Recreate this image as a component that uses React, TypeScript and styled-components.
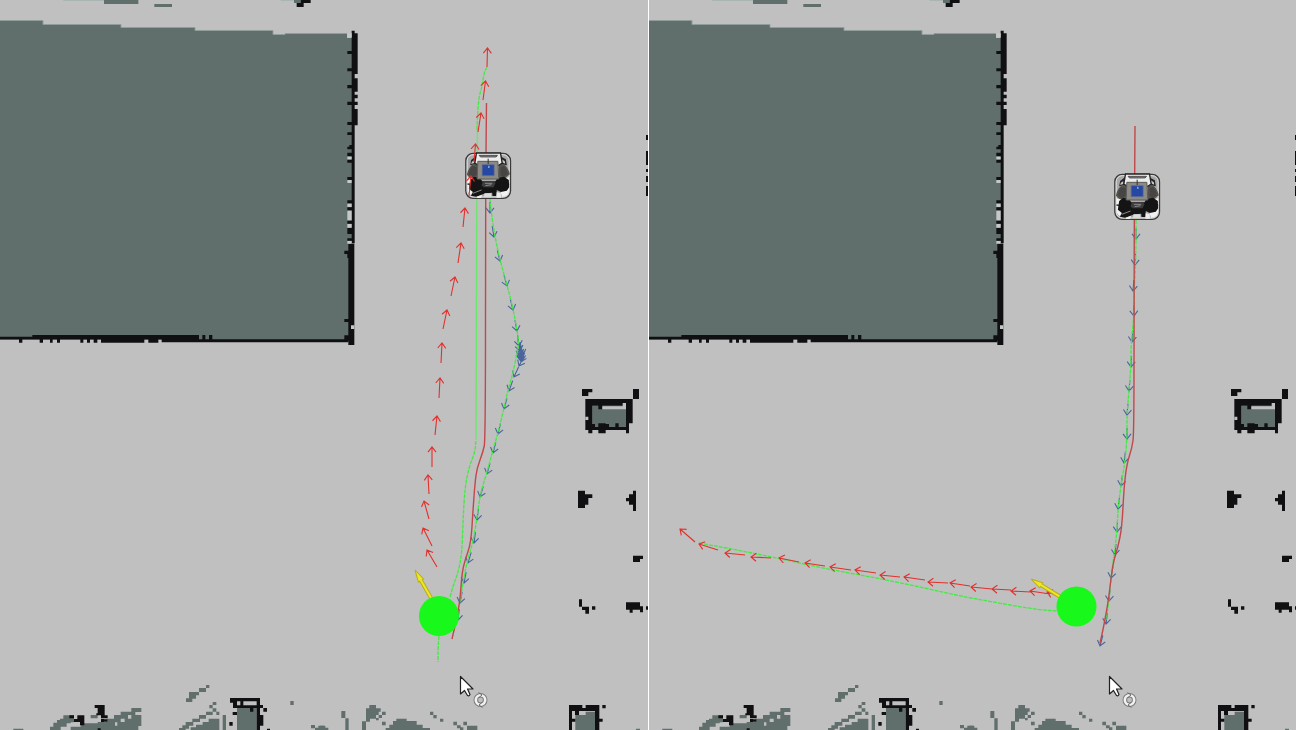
import React from "react";
import styled, { createGlobalStyle } from "styled-components";

const GlobalStyle = createGlobalStyle`
  body {
    margin: 0;
    background: #c0c0c0;
    font-family: "Liberation Sans", Arial, sans-serif;
  }
`;

const Comparison = styled.main`
  display: grid;
  grid-template-columns: 1fr 1fr;
  min-height: 100vh;
`;

const Pane = styled.section<{ $divided?: boolean }>`
  min-width: 0;
  background: #c0c0c0;
  border-left: ${(p) => (p.$divided ? "1px solid #ffffff" : "0")};
`;

const MapCanvas = styled.svg`
  display: block;
  width: 100%;
  height: 100vh;
`;

type Point = [number, number];
type Block = [number, number, number, number];
type Segment = [number, number, number, number];

const FLOOR = "#c0c0c0";
const UNKNOWN = "#606e6c";
const WALL = "#101012";
const THIRD = 1 / 3;

/* Occupancy blocks are [left, top, right, bottom], in thirds of a map pixel. */
function Blocks({ x = 0, y = 0, fill, cells }: { x?: number; y?: number; fill: string; cells: Block[] }) {
  const d = cells.map(([l, t, r, b]) => `M${l} ${t}H${r}V${b}H${l}Z`).join("");
  return <path transform={`translate(${x} ${y}) scale(${THIRD})`} fill={fill} d={d} />;
}

const roomEdge: Block[] = [
  [95, 32, 104, 670], [95, 40, 113, 162], [95, 175, 113, 215], [95, 224, 113, 235], [95, 245, 113, 255],
  [95, 267, 113, 316], [85, 671, 103, 975], [82, 93, 95, 102], [82, 145, 95, 154], [82, 195, 95, 205],
  [82, 245, 95, 255], [82, 306, 95, 315], [82, 337, 95, 345], [82, 380, 95, 388], [88, 375, 95, 380],
  [82, 398, 95, 408], [82, 420, 95, 428], [82, 471, 95, 480], [82, 541, 95, 550], [82, 562, 95, 571],
  [82, 602, 95, 611], [82, 624, 95, 642], [82, 655, 95, 662], [73, 692, 85, 702], [82, 702, 86, 714],
  [73, 897, 85, 906], [73, 946, 85, 962],
];
const roomGaps: Block[] = [
  [82, 40, 95, 52], [82, 410, 95, 418], [82, 480, 95, 489], [82, 551, 95, 561], [82, 572, 95, 601],
  [82, 612, 95, 623], [82, 663, 95, 671], [93, 916, 103, 927],
];
const roomBase: Block[] = [
  [0, 80, 97, 88], [97, 75, 597, 88], [303, 88, 433, 98], [445, 88, 475, 98], [485, 88, 1045, 97],
  [607, 75, 616, 88], [627, 75, 637, 88], [57, 88, 67, 98], [119, 88, 129, 98], [150, 88, 158, 98],
  [171, 88, 180, 98], [241, 88, 250, 98], [261, 88, 270, 98], [281, 88, 292, 98],
];
const clutter: Block[] = [
  [66, 57, 97, 67], [66, 67, 85, 78], [219, 57, 237, 87], [76, 87, 218, 107], [76, 87, 97, 180],
  [198, 87, 218, 160], [198, 160, 207, 190], [85, 171, 207, 180], [85, 180, 97, 190], [115, 160, 137, 190],
  [97, 162, 105, 180], [137, 162, 147, 172], [166, 160, 176, 171], [115, 107, 127, 118],
  [54, 362, 75, 414], [75, 373, 85, 404], [85, 373, 97, 384], [219, 362, 228, 423], [207, 373, 219, 404],
  [198, 384, 207, 394], [219, 557, 249, 567], [219, 567, 240, 576], [57, 688, 66, 710], [66, 710, 87, 720],
  [76, 720, 87, 731], [96, 709, 106, 719], [198, 697, 240, 719], [240, 709, 249, 727], [209, 719, 218, 728],
  [258, 709, 264, 719],
];
const lowerLeftGrey: Block[] = [
  [394, 114, 424, 126], [362, 125, 406, 135], [342, 135, 384, 146], [320, 146, 362, 157], [293, 156, 345, 167],
  [394, 135, 424, 146], [374, 146, 424, 157], [352, 156, 424, 168], [322, 167, 415, 180], [180, 146, 222, 157],
  [190, 136, 222, 147], [171, 150, 212, 160], [160, 158, 200, 170], [150, 170, 182, 180], [242, 160, 322, 172],
  [212, 170, 330, 180], [272, 135, 293, 145], [40, 176, 70, 180],
  [618, 45, 628, 54], [597, 54, 618, 66], [567, 66, 597, 76], [567, 76, 588, 86], [558, 85, 577, 96],
  [638, 96, 649, 105], [628, 105, 638, 115], [638, 115, 649, 125], [649, 125, 658, 135], [618, 125, 638, 135],
  [597, 135, 618, 146], [577, 146, 600, 156], [557, 156, 580, 167], [537, 174, 557, 180], [547, 166, 567, 176],
  [626, 146, 658, 180], [608, 156, 658, 180], [588, 164, 658, 180], [572, 172, 658, 180], [668, 135, 678, 180],
  [711, 114, 770, 180], [871, 93, 881, 105], [933, 165, 945, 175], [955, 167, 976, 180], [945, 173, 985, 180],
];
const lowerLeftWall: Block[] = [
  [284, 105, 314, 114], [293, 114, 314, 136], [303, 135, 314, 145], [289, 130, 314, 136], [314, 136, 323, 145],
  [303, 147, 312, 156], [208, 136, 222, 145], [232, 136, 253, 147], [222, 147, 253, 156], [240, 156, 253, 166],
  [293, 175, 302, 180], [312, 148, 322, 155],
  [690, 84, 780, 94], [690, 94, 711, 98], [699, 98, 711, 114], [699, 106, 780, 114], [721, 94, 730, 108],
  [770, 84, 780, 180], [780, 135, 790, 167], [790, 114, 801, 125], [780, 105, 789, 114], [750, 114, 760, 125],
  [698, 126, 711, 135], [688, 156, 698, 167], [801, 176, 810, 180],
];
const lowerRightGrey: Block[] = [
  [64, 123, 76, 144], [76, 145, 86, 180], [0, 167, 12, 180], [12, 174, 22, 180], [148, 105, 168, 115],
  [138, 115, 182, 125], [138, 125, 176, 135], [186, 125, 197, 135], [138, 135, 168, 146], [176, 135, 186, 144],
  [168, 144, 176, 151], [138, 146, 150, 155], [126, 154, 138, 180], [186, 155, 197, 166], [229, 146, 260, 156],
  [219, 153, 290, 166], [208, 164, 308, 180], [197, 174, 330, 180], [330, 125, 340, 135], [340, 135, 350, 145],
  [360, 146, 370, 155], [400, 155, 411, 166], [411, 166, 422, 175], [430, 155, 441, 166], [420, 172, 430, 180],
  [441, 167, 472, 180], [766, 135, 825, 180], [797, 125, 825, 136], [948, 176, 960, 180],
];
const lowerRightWall: Block[] = [
  [747, 105, 787, 123], [797, 105, 838, 123], [787, 114, 797, 123], [747, 105, 756, 180], [756, 146, 766, 155],
  [765, 123, 777, 135], [825, 105, 838, 180], [838, 146, 848, 155], [847, 105, 857, 115],
];

function OccupancyGrid() {
  return (
    <g>
      <path
        fill={UNKNOWN}
        d="M0 21H43V24H121V28H195V31H273V35H285V34H347V38H352V340H0Z"
      />
      <path
        fill="none"
        stroke="#8f9d9b"
        d="M0 20.5H43V24.5H121V27.5H195V30.5H273V34.5H285V33.5H347"
      />
      <Blocks fill={UNKNOWN} cells={[[312, 0, 415, 12], [463, 12, 516, 21], [882, 0, 902, 9]]} />
      <Blocks fill="#a9b5b2" cells={[[190, 0, 312, 3], [842, 0, 882, 3]]} />
      <Blocks fill={WALL} cells={[[902, 0, 932, 9], [890, 9, 911, 21]]} />
      <Blocks x={320} y={20} fill={WALL} cells={roomEdge} />
      <Blocks x={320} y={20} fill="#c4c8c7" cells={roomGaps} />
      <Blocks y={310} fill={WALL} cells={roomBase} />
      <Blocks x={560} y={370} fill={UNKNOWN} cells={[[97, 107, 198, 171]]} />
      <Blocks x={560} y={370} fill={WALL} cells={clutter} />
      <Blocks x={560} y={370} fill={FLOOR} cells={[[76, 140, 85, 150], [127, 109, 198, 118], [188, 99, 198, 109]]} />
      <Blocks y={670} fill={UNKNOWN} cells={lowerLeftGrey} />
      <Blocks y={670} fill={WALL} cells={lowerLeftWall} />
      <Blocks x={320} y={670} fill={UNKNOWN} cells={lowerRightGrey} />
      <Blocks x={320} y={670} fill={WALL} cells={lowerRightWall} />
      <path fill={WALL} d="M646 135h2v5h-2zM646 151h2v14h-2zM646 169h2v3h-2zM646 176h2v6h-2zM646 186h2v10h-2z" />
    </g>
  );
}

function arrowPath([tx, ty, bx, by]: Segment, wing: number) {
  const length = Math.hypot(bx - tx, by - ty) || 1;
  const ux = (bx - tx) / length;
  const uy = (by - ty) / length;
  const back = wing * 1.3;
  return (
    `M${bx} ${by}L${tx} ${ty}` +
    `M${tx + ux * back - uy * wing} ${ty + uy * back + ux * wing}L${tx} ${ty}` +
    `L${tx + ux * back + uy * wing} ${ty + uy * back - ux * wing}`
  );
}

function PoseArrows({ poses, color, wing }: { poses: Segment[]; color: string; wing: number }) {
  return <path d={poses.map((p) => arrowPath(p, wing)).join("")} fill="none" stroke={color} strokeWidth={1.1} />;
}

/* Rounds each corner of a track by curving from midpoint to midpoint. */
function trackPath(points: Point[]) {
  const [first] = points;
  const last = points[points.length - 1];
  const curves = points.slice(1, -1).map(([x, y], i) => {
    const [nx, ny] = points[i + 2];
    return `Q${x} ${y} ${(x + nx) / 2} ${(y + ny) / 2}`;
  });
  return `M${first[0]} ${first[1]}${curves.join("")}L${last[0]} ${last[1]}`;
}

function Track({ points, color, dashed }: { points: Point[]; color: string; dashed?: boolean }) {
  return (
    <path
      d={trackPath(points)}
      fill="none"
      stroke={color}
      strokeWidth={dashed ? 1.3 : 1.4}
      strokeDasharray={dashed ? "4 1" : undefined}
    />
  );
}

/* Short arrows that point along a descending path, one for each tip. */
const descending = (tips: Point[]): Segment[] =>
  tips.map(([x, y], i) => {
    const [px, py] = i ? tips[i - 1] : ([x, y - 14] as Point);
    const length = Math.hypot(px - x, py - y) || 1;
    return [x, y, x + ((px - x) / length) * 11, y + ((py - y) / length) * 11];
  });

function Robot({ x, y }: { x: number; y: number }) {
  return (
    <g transform={`translate(${x} ${y}) scale(${THIRD})`}>
      <rect x="1" y="4" width="134" height="135" rx="22" fill="#a9a9a9" stroke="#3a3a3a" strokeWidth="4" />
      <rect x="5" y="8" width="126" height="127" rx="18" fill="none" stroke="#e4e4e4" strokeWidth="3" />
      <path d="M17 24L32 12L30 36L14 40ZM103 12L121 22L124 40L106 36Z" fill="#262626" />
      <path d="M19 29L27 24L26 33L17 36ZM109 22L118 28L119 35L110 31Z" fill="#c9c9c9" />
      <path d="M24 35L40 38V74L21 84L4 68Q8 46 24 35ZM101 36L113 35Q129 46 133 67L112 84L98 74Z" fill="#56524d" />
      <path d="M20 42L34 46V68L20 76L10 66Q12 50 20 42ZM106 46L116 42Q125 52 127 66L113 76L105 68Z" fill="#474543" />
      <path d="M33 3H105L110 33L100 40H38L28 33Z" fill="#ececec" stroke="#242424" strokeWidth="4" />
      <path d="M41 10H96L92 15H45Z" fill="#8a8a8a" stroke="#222222" strokeWidth="2" />
      <path d="M5 76L24 80L38 120L32 132Q7 134 6 112ZM131 76L112 80L104 118L110 134Q131 134 131 112Z" fill="#f2f2f2" />
      <path d="M6 96L20 98M116 98L131 96" stroke="#2b2b2b" strokeWidth="4" />
      <path
        d="M14 84L26 74L44 78L50 88L90 88L96 78L116 74L130 84L131 106L124 116L106 120L94 114L92 132H81L80 122L60 124L32 134L16 131L22 120L10 110Z"
        fill="#141414"
      />
      <path d="M52 88H86L90 94L84 106H54L48 100Z" fill="#3c3c3c" />
      <path d="M58 94H80M60 101L78 98M22 124L48 114" fill="none" stroke="#8a8a8a" strokeWidth="3" />
      <path d="M57 124H77V136H55Z" fill="#dcdcdc" />
      <path d="M94 120L106 124V137H93Z" fill="#eeeeee" />
      <path d="M34 134L50 128L47 138H34Z" fill="#eeeeee" />
      <path d="M37 28H97L100 81H35Z" fill="#8b8a86" stroke="#5d5c5a" strokeWidth="3" />
      <path d="M50 38H86V71H50Z" fill="#2548a4" stroke="#66708c" strokeWidth="2" />
      <path d="M68 20V36" fill="none" stroke="#333333" strokeWidth="3" />
      <path d="M70 41V48" stroke="#92b1df" strokeWidth="4" />
    </g>
  );
}

function Goal({ x, y, tip, tail }: { x: number; y: number; tip: Point; tail: Point }) {
  const angle = (Math.atan2(tip[1] - tail[1], tip[0] - tail[0]) * 180) / Math.PI;
  const reach = Math.hypot(tip[0] - tail[0], tip[1] - tail[1]);
  return (
    <g>
      <g transform={`translate(${tail[0]} ${tail[1]}) rotate(${angle})`}>
        <path
          d={`M-3 -1.5H${reach - 12}V-3L${reach} 0L${reach - 12} 3V1.5H-3Z`}
          fill="#eee820"
          stroke="#b8ac1c"
          strokeWidth="1"
        />
      </g>
      <circle cx={x} cy={y} r="20" fill="#18f81a" />
    </g>
  );
}

function RotateCursor() {
  return (
    <g>
      <path
        d="M460.500 676.500V694L464.500 690.500L467.500 695.500Q469 696.500 470 694.500L467.500 689H473Z"
        fill="#ffffff"
        stroke="#202020"
        strokeWidth="1.200"
        strokeLinejoin="round"
      />
      <g transform="translate(480.5 700)" fill="none">
        <circle r="4.7" stroke="#7c7c7c" strokeWidth="4.600" />
        <circle r="4.7" stroke="#f2f2f2" strokeWidth="2.600" />
        <path d="M-2 -7.500L1.500 -5L-1.500 -2.500M2 7.500L-1.500 5L1.500 2.500" stroke="#6c6c6c" strokeWidth="1" />
      </g>
    </g>
  );
}

const RED = "#e2302c";
const PATH_RED = "#c0484a";
const GREEN = "#43ea43";
const BLUE = "#4a659c";

interface Scene {
  name: string;
  robot: Point;
  goal: { x: number; y: number; tip: Point; tail: Point };
  green: Point[][];
  solidGreen: Point[][];
  red: Point[];
  forward: Segment[];
  back: Segment[];
}

const detour: Scene = {
  name: "Planned route with a detour",
  robot: [465.5, 152],
  goal: { x: 439, y: 616, tip: [415, 570], tail: [431, 598] },
  green: [
    [[450, 597], [454, 583], [458, 573], [462, 553], [463, 520], [465, 487], [469, 467], [475, 452], [476, 440]],
    [[477, 130], [478, 100], [482, 87], [484, 73], [487, 67]],
    [[439, 636], [438, 647], [438, 662]],
    [
      [490, 198], [491, 211], [495, 237], [500, 260], [507, 285], [513, 308], [517, 330], [519, 343], [517, 353],
      [513, 373], [508, 390], [504, 408], [498, 433], [493, 450], [487, 472], [480, 495], [477, 518], [473, 542],
      [467, 562], [463, 582], [460, 603],
    ],
  ],
  solidGreen: [[[476, 440], [476, 300], [477.5, 130]]],
  red: [
    [486.5, 103], [486, 155], [485.5, 198], [485.5, 440], [483, 452], [477, 468], [475, 483], [473, 510], [471, 543],
    [465, 560], [462, 573], [460, 600], [457, 617], [452, 639],
  ],
  forward: [
    [487.5, 48, 487, 67], [485.5, 81, 483, 100], [481, 113, 478, 132], [475.5, 144, 474, 162], [471, 176, 469, 196],
    [465, 208, 463, 227], [461, 243, 458, 263], [455, 277, 451, 296], [447, 310, 443, 329], [442, 343, 441, 363],
    [440, 378, 439, 398], [437, 416, 435, 435], [432, 447, 432, 467], [428, 475, 429, 494], [424, 501, 429, 519],
    [423, 528, 432, 546], [427, 550, 437, 567],
  ],
  back: [
    ...descending([
      [490, 213], [494, 237], [500, 261], [507, 286], [513, 310], [517, 331], [519, 346], [520, 351], [521, 355],
      [522, 359], [521, 362], [519, 366], [514, 377], [509, 391], [504, 409], [498, 434], [493, 453], [487, 474],
      [480, 497], [477, 520], [474, 543], [468, 563], [464, 583], [460, 603], [458, 620],
    ]),
    [521, 357, 519, 343], [523, 355, 520, 342], [520, 360, 520, 345], [522, 361, 521, 346],
  ],
};

const direct: Scene = {
  name: "Planned route straight to the goal",
  robot: [465.5, 173],
  goal: { x: 427.5, y: 606.5, tip: [382, 579], tail: [410, 596] },
  green: [
    [
      [50, 543], [78, 548], [128, 558], [178, 569], [244, 581], [311, 596], [344, 602], [378, 608], [394, 610],
      [408, 611],
    ],
    [
      [487, 220], [487, 262], [485, 291], [485, 316], [482, 345], [482, 366], [480, 390], [478, 415], [478, 438],
      [476, 462], [472, 485], [469, 508], [468, 532], [465, 555], [462, 578], [460, 600], [457, 620],
    ],
  ],
  solidGreen: [],
  red: [
    [486, 126], [485.5, 173], [485, 300], [485, 433], [483, 448], [478, 463], [475, 487], [473, 527], [469, 547],
    [464, 563], [461, 587], [459, 603], [454, 630], [451, 643],
  ],
  forward: [
    [31, 529, 46, 542], [50, 544, 69, 550], [76, 553, 96, 555], [102, 557, 122, 558], [130, 558, 150, 562],
    [156, 563, 176, 566], [181, 567, 202, 570], [206, 570, 227, 573], [231, 575, 251, 577], [255, 577, 276, 580],
    [279, 582, 299, 583], [301, 583, 321, 586], [322, 587, 343, 589], [343, 589, 362, 590], [362, 591, 382, 592],
    [381, 591, 401, 594], [398, 592, 414, 597],
  ],
  back: descending([
    [487, 239], [486, 265], [484, 291], [485, 316], [483, 342], [482, 367], [480, 391], [478, 415], [478, 439],
    [475, 463], [472, 486], [469, 509], [468, 532], [466, 555], [462, 578], [460, 601], [457, 624], [451, 646],
  ]),
};

function SceneMap({ scene }: { scene: Scene }) {
  return (
    <MapCanvas viewBox="0 0 648 730" preserveAspectRatio="xMinYMin slice" role="img" aria-label={scene.name}>
      <OccupancyGrid />
      {scene.solidGreen.map((points, i) => (
        <Track key={i} points={points} color="#6be86a" />
      ))}
      <PoseArrows poses={scene.back} color={BLUE} wing={4} />
      {scene.green.map((points, i) => (
        <Track key={i} points={points} color={GREEN} dashed />
      ))}
      <Track points={scene.red} color={PATH_RED} />
      <Robot x={scene.robot[0]} y={scene.robot[1]} />
      <PoseArrows poses={scene.forward} color={RED} wing={4} />
      <Goal {...scene.goal} />
      <RotateCursor />
    </MapCanvas>
  );
}

export default function App() {
  return (
    <>
      <GlobalStyle />
      <Comparison>
        <Pane>
          <SceneMap scene={detour} />
        </Pane>
        <Pane $divided>
          <SceneMap scene={direct} />
        </Pane>
      </Comparison>
    </>
  );
}
